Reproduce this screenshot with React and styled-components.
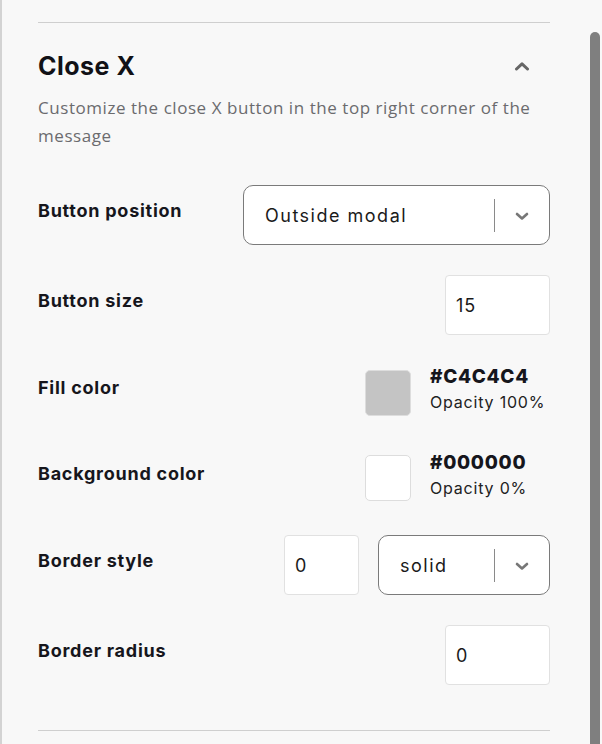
import styled, { createGlobalStyle } from "styled-components";

const GlobalStyle = createGlobalStyle`
    html, body {
        margin: 0;
        padding: 0;
        background: #f8f8f8;
    }
    * {
        box-sizing: border-box;
    }
`;

const ChevronDown = () => (
    <svg width="14" height="9" viewBox="0 0 14 9">
        <path d="M2 2 L7 6.5 L12 2" fill="none" stroke="#777" strokeWidth="2.6" strokeLinecap="round" strokeLinejoin="round" />
    </svg>
);

const ChevronUp = () => (
    <svg width="16" height="10" viewBox="0 0 16 10">
        <path d="M2.5 8 L8 2.8 L13.5 8" fill="none" stroke="#666" strokeWidth="3" strokeLinecap="round" strokeLinejoin="round" />
    </svg>
);

const Select = ({ value, width }) => (
    <SelectBox $width={width}>
        <SelectValue>{value}</SelectValue>
        <SelectSep />
        <SelectArrow>
            <ChevronDown />
        </SelectArrow>
    </SelectBox>
);

const ColorField = ({ color, hex, opacity }) => (
    <ColorWrap>
        <Swatch $color={color} />
        <ColorText>
            <Hex>{hex}</Hex>
            <Opacity>Opacity {opacity}%</Opacity>
        </ColorText>
    </ColorWrap>
);

export default function App() {
    return (
        <Page>
            <GlobalStyle />
            <Panel>
                <Divider />
                <Header>
                    <Title>Close X</Title>
                    <Toggle>
                        <ChevronUp />
                    </Toggle>
                </Header>
                <Description>
                    Customize the close X button in the top right corner of the message
                </Description>

                <Rows>
                    <Row $h={90}>
                        <Label>Button position</Label>
                        <Select value="Outside modal" width={307} />
                    </Row>
                    <Row $h={90}>
                        <Label>Button size</Label>
                        <NumberBox>15</NumberBox>
                    </Row>
                    <Row $h={85}>
                        <Label>Fill color</Label>
                        <ColorField color="#c4c4c4" hex="#C4C4C4" opacity={100} />
                    </Row>
                    <Row $h={86}>
                        <Label>Background color</Label>
                        <ColorField color="#ffffff" hex="#000000" opacity={0} />
                    </Row>
                    <Row $h={88}>
                        <Label>Border style</Label>
                        <Controls>
                            <NumberBox $width={75}>0</NumberBox>
                            <Select value="solid" width={172} />
                        </Controls>
                    </Row>
                    <Row $h={92}>
                        <Label>Border radius</Label>
                        <NumberBox>0</NumberBox>
                    </Row>
                </Rows>
                <Divider />
            </Panel>
            <Scrollbar />
        </Page>
    );
}

const Page = styled.div`
    position: relative;
    width: 602px;
    height: 744px;
    overflow: hidden;
    background: #f8f8f8;
    border-left: 2px solid #d3d3d3;
    font-family: "Inter", "Liberation Sans", sans-serif;
    color: #15151a;
`;

const Panel = styled.div`
    width: 548px;
    padding: 22px 0 0 36px;
    display: flex;
    flex-direction: column;
`;

const Divider = styled.div`
    height: 1px;
    background: #cfcfcf;
`;

const Header = styled.div`
    display: flex;
    align-items: center;
    justify-content: space-between;
    margin-top: 26px;
    height: 34px;
`;

const Title = styled.h2`
    margin: 0;
    font-size: 25px;
    font-weight: 700;
    letter-spacing: 0.5px;
    color: #111116;
`;

const Toggle = styled.div`
    display: flex;
    margin-right: 20px;
`;

const Description = styled.p`
    margin: 11px 0 0;
    font-family: "Open Sans", "Liberation Sans", sans-serif;
    font-size: 17px;
    letter-spacing: 0.55px;
    line-height: 28px;
    color: #6b6b6e;
    padding-right: 6px;
`;

const Rows = styled.div`
    display: flex;
    flex-direction: column;
    margin-top: 20px;
    margin-bottom: 29px;
`;

const Row = styled.div`
    display: flex;
    align-items: center;
    justify-content: space-between;
    height: ${(p) => p.$h}px;
`;

const Label = styled.div`
    font-size: 18px;
    font-weight: 700;
    letter-spacing: 0.75px;
    color: #16161c;
    margin-bottom: 10px;
`;

const Controls = styled.div`
    display: flex;
    gap: 19px;
`;

const SelectBox = styled.div`
    display: flex;
    align-items: center;
    width: ${(p) => p.$width}px;
    height: 60px;
    background: #fff;
    border: 1px solid #7a7a7a;
    border-radius: 10px;
    padding-left: 21px;
`;

const SelectValue = styled.div`
    flex: 1;
    font-size: 18px;
    letter-spacing: 1.5px;
    color: #1a1a1a;
`;

const SelectSep = styled.div`
    width: 1px;
    height: 33px;
    background: #8a8a8a;
`;

const SelectArrow = styled.div`
    width: 54px;
    display: flex;
    justify-content: center;
    padding-top: 2px;
`;

const NumberBox = styled.div`
    width: ${(p) => p.$width || 105}px;
    height: 60px;
    background: #fff;
    border: 1px solid #e1e1e1;
    border-radius: 4px;
    display: flex;
    align-items: center;
    padding-left: 10px;
    font-size: 18px;
    letter-spacing: 1px;
    color: #1a1a1a;
`;

const ColorWrap = styled.div`
    display: flex;
    align-items: center;
    gap: 19px;
    width: 185px;
`;

const Swatch = styled.div`
    width: 46px;
    height: 46px;
    border-radius: 5px;
    background: ${(p) => p.$color};
    border: 1px solid #dddddd;
`;

const ColorText = styled.div`
    display: flex;
    flex-direction: column;
    gap: 4px;
    margin-bottom: 8px;
`;

const Hex = styled.div`
    font-size: 19px;
    font-weight: 800;
    letter-spacing: 0.7px;
    color: #16161c;
`;

const Opacity = styled.div`
    font-size: 16px;
    letter-spacing: 0.8px;
    color: #222;
`;

const Scrollbar = styled.div`
    position: absolute;
    top: 32px;
    right: 2px;
    width: 10px;
    height: 730px;
    border-radius: 5px;
    background: #7f7f7f;
`;
